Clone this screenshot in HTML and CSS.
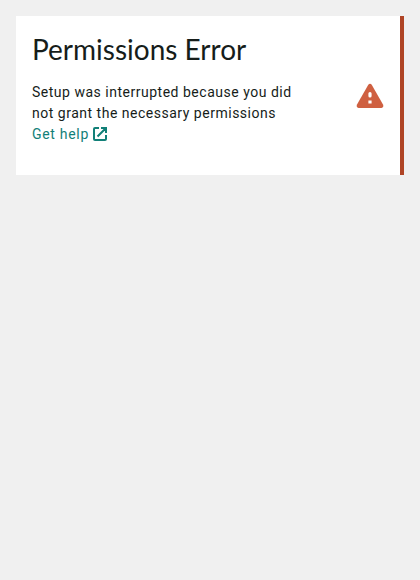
FILE: index.html
```html
<!DOCTYPE html>
<html lang="en">
<head>
<meta charset="utf-8">
<title>Permissions Error</title>
<link rel="stylesheet" href="styles.css">
</head>
<body>
<section class="card">
  <h1 class="title">Permissions Error</h1>
  <div class="content">
    <p class="message">Setup was interrupted because you did<br>not grant the necessary permissions<br><a class="link" href="#">Get help<svg class="link-icon" viewBox="0 0 14 14" aria-hidden="true"><path d="M6 1H2Q1 1 1 2V12Q1 13 2 13H12Q13 13 13 12V8M8 1H13V6M13 1L4.5 9.5" fill="none" stroke="currentColor" stroke-width="2"/></svg></a></p>
    <svg class="warning" viewBox="0 0 28 26" aria-hidden="true">
      <path d="M12.3 1.8Q14 -.4 15.7 1.8L27 21.4Q28.2 24.6 25.5 25H2.5Q-.2 24.6 1 21.4Z" fill="#cf6041"/>
      <path d="M12.4 10.5Q12.4 9 14 9T15.6 10.5V13Q15.6 14.5 14 14.5T12.4 13ZM12.4 17.5H15.6V20.5H12.4Z" fill="#fff"/>
    </svg>
  </div>
</section>
</body>
</html>
```

FILE: styles.css
```css
body {
  margin: 0;
  padding: 16px;
  background: #f0f0f0;
  color: #161d1a;
  font-family: Roboto, sans-serif;
}

.card {
  box-sizing: border-box;
  height: 159px;
  padding: 16px;
  border-right: 4px solid #af4425;
  background: #fff;
}

.title {
  margin: 0;
  font-family: Lato, sans-serif;
  font-size: 28px;
  font-weight: 400;
  line-height: 34px;
  white-space: nowrap;
}

.content {
  display: flex;
  justify-content: space-between;
  align-items: flex-start;
  padding-top: 16px;
}

.message {
  margin: 0;
  font-size: 14px;
  line-height: 21px;
  letter-spacing: 0.51px;
  white-space: nowrap;
}

.link {
  color: #128078;
  text-decoration: none;
  letter-spacing: 0.7px;
}

.link-icon {
  width: 14px;
  height: 14px;
  margin-left: 4px;
  vertical-align: -2px;
}

.warning {
  width: 28px;
  height: 26px;
  margin-top: 1px;
}
```
